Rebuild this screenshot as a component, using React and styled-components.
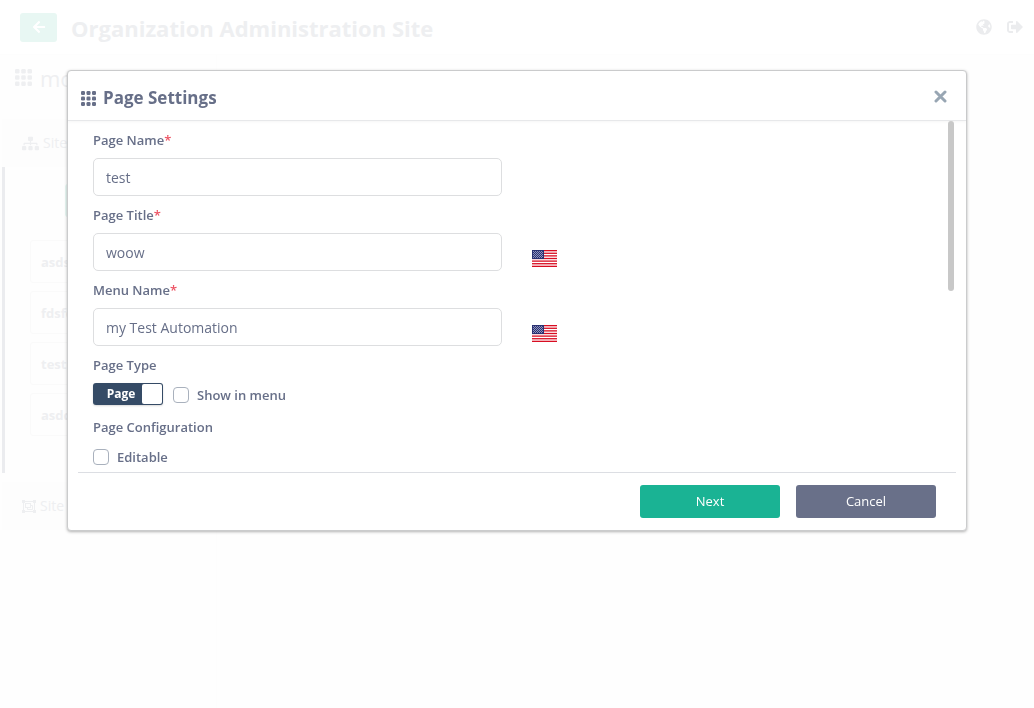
import React from 'react';
import styled, { createGlobalStyle } from 'styled-components';
import { FaArrowLeft, FaGlobeAmericas, FaSignOutAlt, FaSitemap } from 'react-icons/fa';

const GlobalStyle = createGlobalStyle`
  *, *::before, *::after { box-sizing: border-box; }
  body {
    margin: 0;
    background: #fefefe;
    color: #676f88;
    font-family: "Open Sans", "Noto Sans", sans-serif;
    font-size: 13px;
    line-height: 20px;
  }
  button, input { font: inherit; color: inherit; }
`;

const Page = styled.div`
  min-height: 100vh;
  display: flex;
  flex-direction: column;
  color: #eeeff1;
`;

const TopBar = styled.header`
  height: 55px;
  display: flex;
  align-items: center;
  padding: 0 11px 0 20px;
  background: #fff;
  border-bottom: 1px solid #fdfdfd;
`;

const BackButton = styled.button`
  width: 37px;
  height: 29px;
  display: grid;
  place-items: center;
  padding: 0;
  border: 0;
  border-radius: 3px;
  background: #e8f7f3;
  color: #fff;
`;

const SiteTitle = styled.h1`
  flex: 1;
  margin: 0 0 0 14px;
  padding-top: 2px;
  font-size: 22px;
  line-height: 30px;
  font-weight: 700;
`;

const TopActions = styled.nav`
  display: flex;
  gap: 15px;
  a { display: flex; color: #ebecee; }
`;

const Columns = styled.div`
  flex: 1;
  display: flex;
`;

const Sidebar = styled.aside`
  width: 217px;
  background: #fefefe;
  border-right: 1px solid #fdfdfd;
`;

const Workspace = styled.main`
  flex: 1;
  background: #fefefe;
`;

const SiteName = styled.h2`
  height: 64px;
  display: flex;
  align-items: flex-start;
  gap: 8px;
  margin: 0;
  padding: 8px 0 0 15px;
  font-size: 22px;
  line-height: 30px;
  font-weight: 400;
  svg { margin-top: 6px; }
`;

const SectionHead = styled.h3`
  height: 48px;
  display: flex;
  align-items: center;
  gap: 4px;
  margin: 0 0 0 2px;
  padding-left: 20px;
  background: #fdfdfd;
  font-size: 14px;
  font-weight: 400;
`;

const SectionBody = styled.div`
  height: 306px;
  margin: 0 0 9px 2px;
  padding: 17px 24px 16px 25px;
  border-left: 3px solid #ebecef;
`;

const AddButton = styled.button`
  display: block;
  width: 92px;
  height: 33px;
  margin: 0 auto 23px;
  border: 0;
  border-radius: 3px;
  background: #e8f7f3;
  color: #fff;
`;

const PageList = styled.ul`
  display: grid;
  gap: 8px;
  margin: 0;
  padding: 0;
  list-style: none;
`;

const PageItem = styled.li`
  height: 43px;
  padding: 11px 10px;
  border: 1px solid #fafafa;
  border-radius: 3px;
  font-weight: 700;
`;

const Overlay = styled.div`
  position: fixed;
  inset: 0;
  display: flex;
  justify-content: center;
  align-items: flex-start;
  padding: 70px 16px 16px;
`;

const Dialog = styled.section`
  width: 100%;
  max-width: 900px;
  background: #fff;
  border: 1px solid #cbcccd;
  border-radius: 4px;
  box-shadow: 0 1px 3px rgba(0, 0, 0, 0.3);
`;

const DialogHeader = styled.header`
  height: 50px;
  display: flex;
  align-items: center;
  gap: 7px;
  padding: 5px 19px 0 13px;
  border-bottom: 1px solid #e7e8ea;
  box-shadow: 0 1px 3px rgba(0, 0, 0, 0.04);
`;

const DialogTitle = styled.h2`
  flex: 1;
  margin: 0;
  font-size: 17px;
  line-height: 24px;
  font-weight: 700;
`;

const CloseButton = styled.button`
  display: flex;
  padding: 0 0 4px;
  border: 0;
  background: none;
  color: #98a6b3;
`;

const DialogBody = styled.div`
  position: relative;
  height: 351px;
  margin: 0 10px;
  padding: 9px 15px 0;
  overflow: hidden;
`;

const ScrollThumb = styled.div`
  position: absolute;
  top: 0;
  right: 2px;
  width: 6px;
  height: 170px;
  border-radius: 3px;
  background: #c8c8c8;
`;

const FieldRow = styled.div`
  display: grid;
  grid-template-columns: 1fr 1fr;
  gap: 30px;
  align-items: end;
  margin-bottom: 9px;
`;

const Field = styled.div`
  display: grid;
  gap: 8px;
`;

const Label = styled.label`
  font-weight: 600;
`;

const Required = styled.span`
  color: #ed5565;
`;

const TextInput = styled.input`
  width: 100%;
  height: 38px;
  padding: 0 12px;
  border: 1px solid #dddee0;
  border-radius: 5px;
  background: #fff;
  font-size: 14px;
  outline: none;
`;

const LanguageButton = styled.button`
  display: flex;
  justify-self: start;
  margin-bottom: 4px;
  padding: 0;
  border: 0;
  background: none;
`;

const GroupLabel = styled.div`
  font-weight: 600;
`;

const Options = styled.div`
  display: flex;
  align-items: center;
  gap: 10px;
  height: 24px;
  margin: 7px 0 11px;
`;

const Switch = styled.button`
  width: 70px;
  height: 22px;
  display: flex;
  align-items: stretch;
  padding: 1px;
  border: 0;
  border-radius: 3px;
  background: #354b66;
  color: #fff;
  font-size: 12px;
  line-height: 20px;
  font-weight: 700;
  box-shadow: 0 1px 2px rgba(0, 0, 0, 0.15);
`;

const SwitchText = styled.span`
  flex: 1;
  padding-left: 6px;
`;

const SwitchKnob = styled.span`
  width: 20px;
  border-radius: 2px;
  background: #fff;
`;

const CheckLabel = styled.label`
  display: flex;
  align-items: center;
  gap: 8px;
  padding-top: 2px;
  font-weight: 600;
`;

const Checkbox = styled.input`
  appearance: none;
  width: 16px;
  height: 16px;
  margin: 0;
  border: 1px solid #a9b1bd;
  border-radius: 4px;
  background: #fff;
`;

const DialogFooter = styled.footer`
  display: flex;
  justify-content: flex-end;
  gap: 16px;
  margin: 0 10px;
  padding: 12px 20px;
  border-top: 1px solid #dcdee3;
`;

const ActionButton = styled.button`
  width: 140px;
  height: 33px;
  padding: 0 0 2px;
  border: 0;
  border-radius: 3px;
  background: ${(p) => (p.$primary ? '#1ab394' : '#697089')};
  color: #fff;
`;

function GridIcon({ size }) {
  return (
    <svg width={size} height={size} viewBox="0 0 15 15" fill="currentColor" aria-hidden="true">
      {[0, 5.5, 11].map((y) =>
        [0, 5.5, 11].map((x) => <rect key={`${x}-${y}`} x={x} y={y} width="4" height="4" rx="1.2" />)
      )}
    </svg>
  );
}

function ObjectGroupIcon() {
  return (
    <svg width="14" height="13" viewBox="0 0 14 13" fill="none" stroke="currentColor" aria-hidden="true">
      <rect x="1.5" y="1.5" width="11" height="10" />
      <rect x="3.5" y="3.5" width="5" height="4" />
      <path d="M9 5.5h1.500v4h-5V8" />
      <path d="M0 0h3v3h-3zM11 0h3v3h-3zM0 10h3v3h-3zM11 10h3v3h-3z" fill="currentColor" stroke="none" />
    </svg>
  );
}

function CloseIcon() {
  return (
    <svg width="13" height="13" viewBox="0 0 13 13" stroke="currentColor" strokeWidth="3" aria-hidden="true">
      <path d="M2 2l9 9M11 2l-9 9" strokeLinecap="round" />
    </svg>
  );
}

function UsFlag() {
  return (
    <svg width="25" height="17" viewBox="0 0 25 17" aria-hidden="true">
      <rect width="25" height="17" fill="#fff" />
      {[0, 1, 2, 3, 4, 5, 6].map((i) => (
        <rect key={i} y={(i * 34) / 13} width="25" height={17 / 13} fill="#d80d22" />
      ))}
      <rect width="12" height="9" fill="#2b3272" />
      {[1, 2, 3, 4, 5, 6, 7].map((y) =>
        [1, 3, 5, 7, 9].map((x) => (
          <rect key={`${x}-${y}`} x={x + (y % 2 ? 0 : 1)} y={y} width="1" height="1" fill="#8f94bd" />
        ))
      )}
    </svg>
  );
}

function TextField({ id, label, value, translated }) {
  return (
    <FieldRow>
      <Field>
        <Label htmlFor={id}>
          {label}
          <Required>*</Required>
        </Label>
        <TextInput id={id} type="text" defaultValue={value} />
      </Field>
      {translated && (
        <LanguageButton type="button" aria-label={`${label} language`}>
          <UsFlag />
        </LanguageButton>
      )}
    </FieldRow>
  );
}

export default function App() {
  return (
    <>
      <GlobalStyle />
      <Page>
        <TopBar>
          <BackButton type="button" aria-label="Back">
            <FaArrowLeft size={14} />
          </BackButton>
          <SiteTitle>Organization Administration Site</SiteTitle>
          <TopActions>
            <a href="#language" aria-label="Language"><FaGlobeAmericas size={16} /></a>
            <a href="#logout" aria-label="Log out"><FaSignOutAlt size={16} /></a>
          </TopActions>
        </TopBar>
        <Columns>
          <Sidebar>
            <SiteName><GridIcon size={17} />mo</SiteName>
            <SectionHead><FaSitemap size={17} />Site</SectionHead>
            <SectionBody>
              <AddButton type="button" aria-label="Add page" />
              <PageList>
                <PageItem>asds</PageItem>
                <PageItem>fdsfd</PageItem>
                <PageItem>test</PageItem>
                <PageItem>asdd</PageItem>
              </PageList>
            </SectionBody>
            <SectionHead><ObjectGroupIcon />Site</SectionHead>
          </Sidebar>
          <Workspace />
        </Columns>
      </Page>
      <Overlay>
        <Dialog role="dialog" aria-modal="true" aria-labelledby="dialog-title">
          <DialogHeader>
            <GridIcon size={15} />
            <DialogTitle id="dialog-title">Page Settings</DialogTitle>
            <CloseButton type="button" aria-label="Close"><CloseIcon /></CloseButton>
          </DialogHeader>
          <DialogBody>
            <TextField id="page-name" label="Page Name" value="test" />
            <TextField id="page-title" label="Page Title" value="woow" translated />
            <TextField id="menu-name" label="Menu Name" value="my Test Automation" translated />
            <GroupLabel>Page Type</GroupLabel>
            <Options>
              <Switch type="button" role="switch" aria-checked="true">
                <SwitchText>Page</SwitchText>
                <SwitchKnob />
              </Switch>
              <CheckLabel><Checkbox type="checkbox" />Show in menu</CheckLabel>
            </Options>
            <GroupLabel>Page Configuration</GroupLabel>
            <Options>
              <CheckLabel><Checkbox type="checkbox" />Editable</CheckLabel>
            </Options>
            <ScrollThumb />
          </DialogBody>
          <DialogFooter>
            <ActionButton type="button" $primary>Next</ActionButton>
            <ActionButton type="button">Cancel</ActionButton>
          </DialogFooter>
        </Dialog>
      </Overlay>
    </>
  );
}
